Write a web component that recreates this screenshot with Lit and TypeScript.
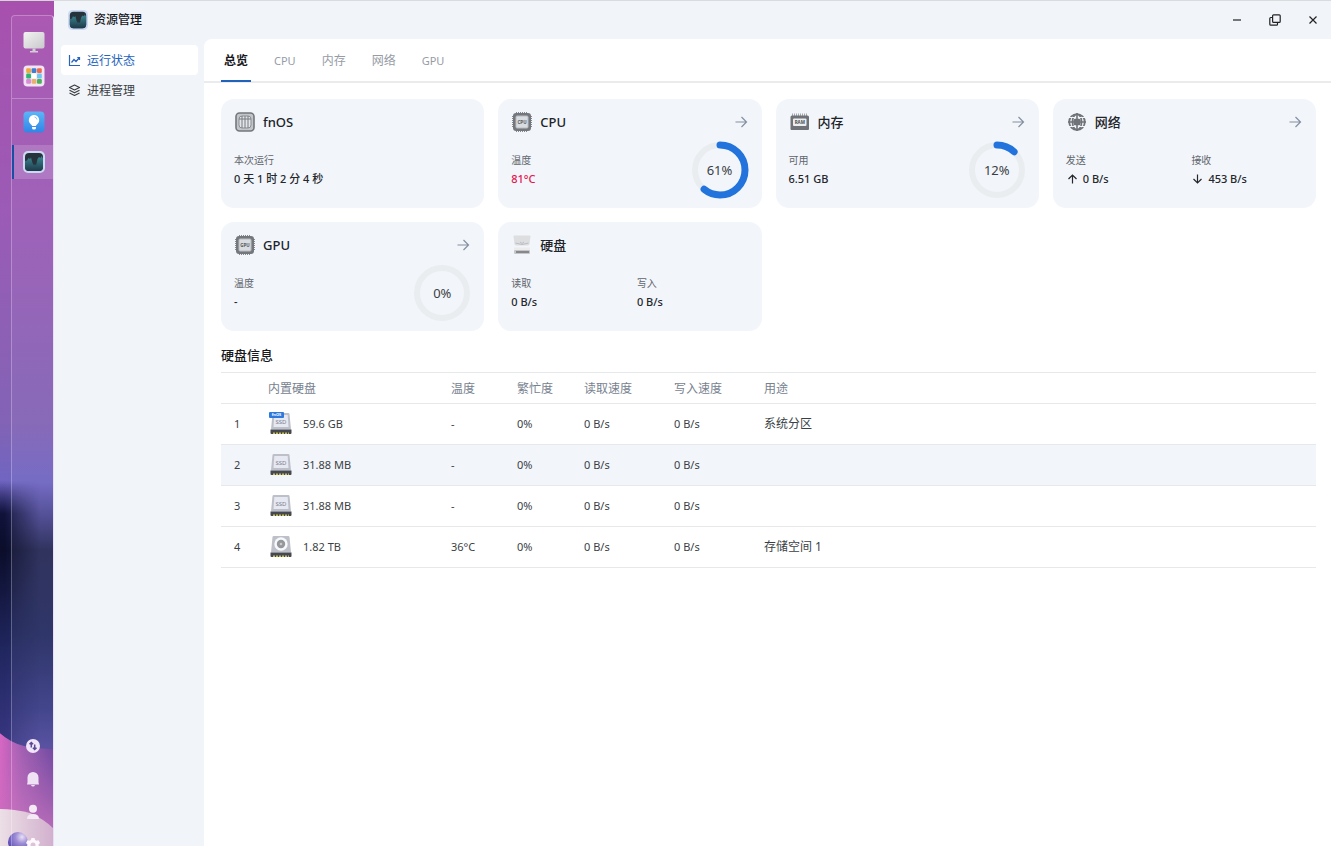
import { LitElement, html, svg, css } from "lit";
import { customElement, property, state } from "lit/decorators.js";

const wave = (id: string) => svg`
  <defs><linearGradient id=${id} x1="0" y1="0" x2="0" y2="1"><stop offset="0" stop-color="#3d8a95"/><stop offset="1" stop-color="#1d3948"/></linearGradient></defs>
  <rect width="22" height="22" rx="5" fill="#cbd9f2"/>
  <rect x="2" y="2" width="18" height="18" rx="4" fill="#26333c"/>
  <path fill="url(#${id})" d="M2 10l2-.5L5.500 7 7 8l1-1.500 1.500 5.500 1.500 2.500 1-1.500 1 1.500L14.500 8 16 6l1.500 1 1-2L20 7.500V16a4 4 0 0 1-4 4H6a4 4 0 0 1-4-4z"/>`;

const chip = (label: string) => svg`
  <path stroke="#85898d" stroke-width="1" d="M5.500 1v20M7.500 1v20M9.500 1v20M11.500 1v20M13.500 1v20M15.500 1v20M1 5.500h20M1 7.500h20M1 9.500h20M1 11.500h20M1 13.500h20M1 15.500h20"/>
  <rect x="2" y="2" width="18" height="18" rx="3" fill="#74787c"/>
  <rect x="5" y="5" width="12" height="12" rx="1" fill="#d9dce0" stroke="#b9bdc1"/>
  <text x="11" y="12.600" text-anchor="middle" font-size="4.500" font-weight="700" fill="#55595d">${label}</text>`;

const icons: Record<string, any> = {
  fnos: svg`<rect x="2" y="2" width="18" height="18" rx="3.500" fill="#c2c5c9" stroke="#74777b" stroke-width="1.600"/>
    <rect x="5" y="5" width="12" height="12" rx="3" fill="#e3e5e8" stroke="#8b8f93"/>
    <path stroke="#777b80" stroke-width="1" d="M8 5v12M11 5v12M14 5v12M5 8h12" fill="none"/>`,
  cpu: chip("CPU"),
  gpu: chip("GPU"),
  ram: svg`<path stroke="#a5a8ac" d="M3.500 2.500v3M5.500 2.500v3M7.500 2.500v3M9.500 2.500v3M11.500 2.500v3M13.500 2.500v3M15.500 2.500v3M17.500 2.500v3"/>
    <path fill="#6f7276" d="M3 4.500h15.500a1.500 1.500 0 0 1 1.500 1.500v12a1 1 0 0 1-1 1H2.500a1 1 0 0 1-1-1V6A1.500 1.500 0 0 1 3 4.500z"/>
    <rect x="4" y="7.500" width="13.500" height="7.500" rx="1" fill="#eceef0"/>
    <text x="10.800" y="12.900" text-anchor="middle" font-size="4.500" font-weight="700" fill="#4b4e52">RAM</text>`,
  net: svg`<circle cx="11" cy="11" r="7.800" fill="none" stroke="#707377" stroke-width="1.800"/>
    <ellipse cx="11" cy="11" rx="4.600" ry="7.800" fill="none" stroke="#707377" stroke-width="1.600"/>
    <path stroke="#f2f5fa" stroke-width="1.200" d="M3 6.500h16M3 15.500h16"/>
    <path stroke="#707377" stroke-width="1.600" d="M2 11h18M11 2v18"/>
    <rect x="7.500" y="7.700" width="7" height="6.600" rx="1.500" fill="#707377"/>`,
  hdd: svg`<path fill="#dcdee0" d="M2.500 2.500q0-1 1-1h15q1 0 1 1l-1 7.500q-.2 1.500-2 1.500h-11q-1.800 0-2-1.500z"/>
    <path fill="none" stroke="#bcbfc2" d="M4.500 9q6.500 3 13 0M9 8l2 1.500L13 8"/>
    <path fill="#ececed" d="M3 13.500h16v2.500H3z"/><rect x="3" y="16" width="16" height="4" rx="1" fill="#c4c6c8"/><path fill="#86888a" d="M5 17h13v2H5z"/>`,
};

@customElement("res-ring")
export class ResRing extends LitElement {
  @property({ type: Number }) value = 0;
  static styles = css`
    :host { display: grid; width: 58px; height: 58px; place-items: center; font-size: 13px; color: #3b3f45; }
    .ring, .label { grid-area: 1 / 1; }
    .track { fill: none; stroke: #eaedf0; stroke-width: 6; }
    .bar { fill: none; stroke: #2273dc; stroke-width: 7; stroke-linecap: round; }
  `;
  render() {
    return html`<svg class="ring" width="58" height="58" viewBox="0 0 58 58" aria-hidden="true">
        <circle class="track" cx="29" cy="29" r="25" />
        ${this.value > 0
          ? svg`<circle class="bar" cx="29" cy="29" r="25" pathLength="100" stroke-dasharray="${this.value} 100" transform="rotate(-90 29 29)"/>`
          : null}
      </svg><span class="label">${this.value}%</span>`;
  }
}

interface Stat { label: string; value: string; hot?: boolean; arrow?: "up" | "down"; }
interface Card { icon: string; title: string; stats: Stat[]; ring?: number; link?: boolean; }

const cards: Card[] = [
  { icon: "fnos", title: "fnOS", stats: [{ label: "本次运行", value: "0 天 1 时 2 分 4 秒" }] },
  { icon: "cpu", title: "CPU", link: true, ring: 61, stats: [{ label: "温度", value: "81°C", hot: true }] },
  { icon: "ram", title: "内存", link: true, ring: 12, stats: [{ label: "可用", value: "6.51 GB" }] },
  { icon: "net", title: "网络", link: true, stats: [{ label: "发送", value: "0 B/s", arrow: "up" }, { label: "接收", value: "453 B/s", arrow: "down" }] },
  { icon: "gpu", title: "GPU", link: true, ring: 0, stats: [{ label: "温度", value: "-" }] },
  { icon: "hdd", title: "硬盘", stats: [{ label: "读取", value: "0 B/s" }, { label: "写入", value: "0 B/s" }] },
];

const disks = [
  { kind: "ssd", system: true, size: "59.6 GB", temp: "-", use: "系统分区" },
  { kind: "ssd", system: false, size: "31.88 MB", temp: "-", use: "" },
  { kind: "ssd", system: false, size: "31.88 MB", temp: "-", use: "" },
  { kind: "hdd", system: false, size: "1.82 TB", temp: "36°C", use: "存储空间 1" },
];

const diskIcon = (kind: string, system: boolean) => html`<svg class="disk" width="24" height="24" viewBox="0 0 24 24" aria-hidden="true">
  <path fill="#bdc0c9" d="M3.500 2q.2-1 1.200-1h14.600q1 0 1.200 1L22 17.500H2z"/>
  <path fill="#454850" d="M1.500 17.500h21V21a1 1 0 0 1-1 1h-19a1 1 0 0 1-1-1z"/>
  <path stroke="#c9bf56" stroke-width="1.500" stroke-dasharray="2 1" d="M4 21.200h16"/>
  ${kind === "ssd"
    ? svg`<path fill="#e6e8f2" d="M5.300 3h13.400l.8 12h-15z"/><text x="12" y="12" text-anchor="middle" font-size="6" fill="#7c808b">SSD</text>`
    : svg`<circle cx="12" cy="9" r="6.700" fill="#f8f9fa"/><circle cx="12" cy="9" r="4.200" fill="#94979b"/><circle cx="12" cy="9" r="1.300" fill="#c9cbce"/>`}
  ${system ? svg`<rect x="0" y="0" width="15" height="6" rx="1" fill="#2f78dc"/><text x="7.500" y="4.200" text-anchor="middle" font-size="4" font-weight="700" fill="#fff">fnOS</text>` : null}
</svg>`;

@customElement("app-root")
export class AppRoot extends LitElement {
  @state() private tab = "总览";

  static styles = css`
    :host {
      display: grid; grid-template-columns: 54px minmax(0, 1fr); height: 100vh; overflow: hidden;
      font-family: "Noto Sans", "Noto Sans CJK SC", sans-serif; font-size: 12px; line-height: 16px; color: #24272c;
    }
    * { box-sizing: border-box; }
    button { font: inherit; color: inherit; border: 0; background: none; padding: 0; margin: 0; cursor: pointer; }
    a { color: inherit; text-decoration: none; }
    svg { display: block; flex: none; }

    .side { position: relative; display: flex; padding: 14px 0 0 11px; min-height: 0; overflow: hidden; border-top: 1px solid #d5d5d8; }
    .wall { position: absolute; inset: 0; width: 100%; height: 100%; }
    .dock { position: relative; flex: 1; display: flex; flex-direction: column; border: 1px solid #ffffff44; border-right: 1px solid #e9dff5; border-bottom: 0; border-radius: 4px 4px 0 0; background: #ffffff0c; }
    .apps { display: flex; flex-direction: column; padding: 9px 0 5px; border-bottom: 1px solid #ffffff44; }
    .app { display: flex; align-items: center; justify-content: center; width: 100%; height: 34px; padding-left: 2px; }
    .running { display: flex; flex-direction: column; gap: 6px; padding-top: 6px; }
    .app.on { background: #ffffff28; box-shadow: inset 2px 0 #174fa5; }
    .tray { display: flex; flex-direction: column; gap: 17px; margin-top: auto; margin-bottom: -7px; align-items: center; }
    .tray button { height: 16px; }

    .window { display: flex; flex-direction: column; min-width: 0; background: #f1f5fa; border-top: 1px solid #d9dbdd; }
    .bar { display: flex; align-items: center; height: 38px; padding: 0 12px 0 14px; gap: 6px; flex: none; }
    .title { margin: 0; font-size: 12px; font-weight: 500; flex: 1; color: #17191d; }
    .controls { display: flex; gap: 26px; }
    .body { flex: 1; display: grid; grid-template-columns: 150px minmax(0, 1fr); min-height: 0; }
    .nav { display: flex; flex-direction: column; padding: 6px 6px 0 7px; }
    .nav a { display: flex; align-items: center; gap: 6px; height: 30px; padding: 1px 7px 0; border-radius: 4px; color: #3b3f45; }
    .nav a.on { background: #fff; color: #2563bd; }

    .main { background: #fff; border-top-left-radius: 8px; min-width: 0; overflow: hidden; }
    .tabs { display: flex; gap: 20px; height: 44px; padding: 0 17px; border-bottom: 2px solid #e9ebed; }
    .tab { height: 43px; padding: 0 3px; color: #969ca6; }
    .tab.latin { font-size: 11px; }
    .tab.on { color: #17191d; font-weight: 700; border-bottom: 2px solid #2163bc; padding-top: 2px; }

    .content { padding: 16px 15px 16px 17px; }
    .cards { display: grid; grid-template-columns: repeat(4, minmax(0, 1fr)); gap: 14px; }
    .card { display: flex; flex-direction: column; height: 109px; padding: 12px 13px 0; border-radius: 13px; background: #f2f5fa; }
    .head { display: flex; align-items: center; gap: 7px; height: 22px; }
    .head h2 { flex: 1; margin: 0; font-size: 13px; font-weight: 500; color: #202328; }
    .facts { display: grid; grid-template-columns: 1fr 1fr; column-gap: 14px; margin-top: 18px; flex: 1; align-items: start; }
    .facts dl { margin: 0; }
    dt { font-size: 10px; line-height: 18px; color: #61656c; }
    dd { display: flex; align-items: center; gap: 4px; margin: 0; font-size: 11px; line-height: 20px; font-weight: 500; white-space: nowrap; color: #24272c; }
    dd.hot { color: #e3164f; }
    res-ring { justify-self: end; margin-top: -10px; }

    .section { margin: 15px 0 8px; font-size: 13px; line-height: 18px; font-weight: 500; color: #17191d; }
    .disks { width: 100%; border-collapse: collapse; table-layout: fixed; border-top: 1px solid #e6e8ea; }
    .disks th { height: 31px; padding: 1px 0 0; text-align: left; font-weight: 400; color: #77828f; border-bottom: 1px solid #e6e8ea; }
    .disks td { height: 41px; padding: 0; font-size: 11px; color: #3b3f45; border-bottom: 1px solid #e6e8ea; }
    .disks td.use { font-size: 12px; }
    .disks td.no { padding-left: 13px; }
    .disks tr.over { background: #f2f5fa; }
    .c-no { width: 47px; } .c-name { width: 183px; } .c-temp { width: 66px; } .c-busy { width: 67px; } .c-speed { width: 90px; }
    .name { display: flex; align-items: center; gap: 10px; padding-left: 1px; }
  `;

  private arrow(dir: "up" | "down") {
    return html`<svg width="13" height="12" viewBox="0 0 13 12" fill="none" stroke="#24272c" stroke-width="1.200" aria-hidden="true">
      <path d=${dir === "up" ? "M6.500 10.500V2M2.500 6l4-4 4 4" : "M6.500 1.500V10M2.500 6l4 4 4-4"} /></svg>`;
  }

  private card(c: Card) {
    return html`<section class="card">
      <div class="head">
        <svg width="22" height="22" viewBox="0 0 22 22" aria-hidden="true">${icons[c.icon]}</svg>
        <h2>${c.title}</h2>
        ${c.link ? html`<button aria-label="${c.title} 详情"><svg width="16" height="16" viewBox="0 0 16 16" fill="none" stroke="#8490a0" stroke-width="1.200"><path d="M2.500 8h11M8.500 3l5 5-5 5"/></svg></button>` : null}
      </div>
      <div class="facts">
        ${c.stats.map((s) => html`<dl><dt>${s.label}</dt><dd class=${s.hot ? "hot" : ""}>${s.arrow ? this.arrow(s.arrow) : null}<span>${s.value}</span></dd></dl>`)}
        ${c.ring !== undefined ? html`<res-ring .value=${c.ring}></res-ring>` : null}
      </div>
    </section>`;
  }

  private wallpaper() {
    return html`<svg class="wall" viewBox="0 0 54 846" preserveAspectRatio="none" aria-hidden="true">
      <defs>
        <linearGradient id="sky" x1="0" y1="0" x2="0" y2="1">
          <stop offset="0" stop-color="#a850ae"/><stop offset=".25" stop-color="#9b5bb6"/><stop offset=".5" stop-color="#8263b5"/>
          <stop offset=".57" stop-color="#6f65c2"/><stop offset=".61" stop-color="#4a4790"/><stop offset=".65" stop-color="#262956"/>
          <stop offset=".75" stop-color="#252d62"/><stop offset=".84" stop-color="#3b3d88"/><stop offset=".88" stop-color="#504a9c"/>
        </linearGradient>
        <linearGradient id="deep" x1="0" y1="0" x2="0" y2="1">
          <stop offset="0" stop-color="#17174c" stop-opacity="0"/><stop offset=".12" stop-color="#10123a"/><stop offset=".25" stop-color="#0b0d2a"/><stop offset=".6" stop-color="#20265e"/><stop offset="1" stop-color="#3a3886"/>
        </linearGradient>
        <linearGradient id="fade" x1="0" y1="0" x2="1" y2="0"><stop offset=".1" stop-color="#fff"/><stop offset="1" stop-color="#000"/></linearGradient>
        <mask id="left"><rect y="480" width="40" height="280" fill="url(#fade)"/></mask>
        <linearGradient id="pink" x1="0" y1="0" x2="1" y2="0"><stop offset="0" stop-color="#d868c4"/><stop offset=".4" stop-color="#9a58ae"/><stop offset="1" stop-color="#5c3d98"/></linearGradient>
        <linearGradient id="rose" x1="0" y1="0" x2="0" y2="1"><stop offset="0" stop-color="#c564bc" stop-opacity="0"/><stop offset="1" stop-color="#cb72bd" stop-opacity=".9"/></linearGradient>
        <linearGradient id="pale" x1="0" y1="0" x2="1" y2="0"><stop offset="0" stop-color="#ecdfe6"/><stop offset="1" stop-color="#cfaccb"/></linearGradient>
        <radialGradient id="ball" cx=".7" cy=".25" r=".8"><stop offset="0" stop-color="#e8e0f6"/><stop offset=".4" stop-color="#9a88d4"/><stop offset="1" stop-color="#5446b4"/></radialGradient>
      </defs>
      <rect width="54" height="846" fill="url(#sky)"/>
      <rect y="480" width="40" height="280" fill="url(#deep)" mask="url(#left)"/>
      <path fill="url(#pink)" d="M0 733q10 9 24 13 14 3 30 3v97H0z"/>
      <path fill="url(#rose)" d="M0 733q10 9 24 13 14 3 30 3v97H0z"/>
      <path fill="url(#pale)" d="M0 809q14 0 30 4 14 6 24 16v17H0z"/>
      <circle cx="18" cy="842" r="10" fill="url(#ball)"/>
    </svg>`;
  }

  render() {
    const colors = ["#f2a93c", "#3f7fd0", "#ef6a4a", "#2bb673", "#ffffff", "#6fc6f2", "#d98bd6", "#e8b070", "#4cb05a"];
    return html`
      <aside class="side">
        ${this.wallpaper()}
        <div class="dock">
          <div class="apps">
            <button class="app" aria-label="桌面"><svg width="22" height="22" viewBox="0 0 22 22"><defs><linearGradient id="scr" x1="0" y1="0" x2="1" y2="1"><stop stop-color="#f3f3f3"/><stop offset="1" stop-color="#c9c9cc"/></linearGradient></defs><rect x=".5" y="1" width="21" height="16.500" rx="2" fill="url(#scr)"/><path fill="#d3cdd8" d="M9.500 17.500h3V20H15v1.500H7V20h2.500z"/></svg></button>
            <button class="app" aria-label="应用"><svg width="22" height="22" viewBox="0 0 22 22"><rect x=".5" y=".5" width="21" height="21" rx="4" fill="#f1e4f4"/>${colors.map((c, i) => svg`<rect x=${3.2 + (i % 3) * 5.4} y=${3.2 + Math.floor(i / 3) * 5.4} width="4.800" height="4.800" rx="1.200" fill=${c}/>`)}</svg></button>
          </div>
          <div class="running">
            <button class="app" aria-label="提示"><svg width="22" height="22" viewBox="0 0 22 22"><defs><linearGradient id="tip" x1="0" y1="0" x2="0" y2="1"><stop stop-color="#5db5f8"/><stop offset="1" stop-color="#3185e6"/></linearGradient></defs><rect x=".5" y=".5" width="21" height="21" rx="4" fill="url(#tip)"/><path fill="#fff" d="M11 4a5.200 5.200 0 0 0-3 9.400c.8.600 1 1.100 1 1.600h4c0-.5.200-1 1-1.600A5.200 5.200 0 0 0 11 4zM9 16h4v1q0 1.500-2 1.500T9 17z"/><path d="M11.500 6a3 3 0 0 1 2.500 2.500" stroke="#8cc6f8" fill="none"/></svg></button>
            <button class="app on" aria-label="资源管理"><svg width="22" height="22" viewBox="0 0 22 22">${wave("w1")}</svg></button>
          </div>
          <div class="tray">
            <button aria-label="传输"><svg width="16" height="16" viewBox="0 0 16 16"><circle cx="8" cy="8" r="7" fill="#f0e6f7"/><path fill="none" stroke="#5a4a96" stroke-width="1.500" d="M6.300 9.500V4.500M4.500 6.300l1.800-1.800 1.800 1.800M9.700 6.500v5M7.900 9.700l1.800 1.800 1.800-1.800"/></svg></button>
            <button aria-label="通知"><svg width="16" height="16" viewBox="0 0 16 16"><path fill="#f0e2f5" d="M8 1a5.500 5.500 0 0 0-5.500 5.500v5L2 13.500h12l-.5-2v-5A5.500 5.500 0 0 0 8 1zM6 14h4q-.5 1.500-2 1.500T6 14z"/></svg></button>
            <button aria-label="用户"><svg width="16" height="16" viewBox="0 0 16 16"><circle cx="8" cy="4.800" r="4" fill="#f5e9f6"/><path fill="#f5e9f6" d="M2 15q0-5 6-5t6 5z"/></svg></button>
            <button aria-label="设置"><svg width="16" height="16" viewBox="0 0 16 16"><path fill="#fdf8fd" fill-rule="evenodd" d="M6.500 1h3l.6 2 1.400.8 2-.5 1.500 2.600L13.500 7.500v1l1.500 1.600-1.500 2.600-2-.5-1.400.8-.6 2h-3l-.6-2-1.400-.8-2 .5L1 10.100l1.500-1.600v-1L1 5.900l1.500-2.600 2 .5L5.900 3zM8 5.500a2.500 2.500 0 1 0 0 5 2.500 2.500 0 0 0 0-5z"/></svg></button>
          </div>
        </div>
      </aside>
      <div class="window">
        <header class="bar">
          <svg width="20" height="20" viewBox="0 0 22 22" aria-hidden="true">${wave("w2")}</svg>
          <h1 class="title">资源管理</h1>
          <div class="controls">
            <button aria-label="最小化"><svg width="12" height="12" viewBox="0 0 12 12"><path d="M2 6h8" stroke="#222" stroke-width="1.200"/></svg></button>
            <button aria-label="还原"><svg width="12" height="12" viewBox="0 0 12 12" fill="none" stroke="#222" stroke-width="1.200"><rect x="3.600" y=".8" width="7.600" height="7.600" rx="1"/><path d="M3.500 3.500H1.800a1 1 0 0 0-1 1v5.700a1 1 0 0 0 1 1h5.700a1 1 0 0 0 1-1V8.500"/></svg></button>
            <button aria-label="关闭"><svg width="12" height="12" viewBox="0 0 12 12"><path d="M2.500 2.500l7 7M9.500 2.500l-7 7" stroke="#222" stroke-width="1.200"/></svg></button>
          </div>
        </header>
        <div class="body">
          <nav class="nav">
            <a class="on" href="#status"><svg width="13" height="13" viewBox="0 0 13 13" fill="none" stroke="#2563bd" stroke-width="1.200"><path d="M1.500 1v10.500H12M3.500 8.500l2.500-3 2 2 3.500-4M11.500 6V3.500H9.300"/></svg>运行状态</a>
            <a href="#process"><svg width="13" height="13" viewBox="0 0 13 13" fill="none" stroke="#3b3f45" stroke-width="1.200" stroke-linejoin="round"><path d="M6.500 1l5 2.500-5 2.500-5-2.500zM1.500 6.300l5 2.500 5-2.500M1.500 9l5 2.500 5-2.500"/></svg>进程管理</a>
          </nav>
          <main class="main">
            <div class="tabs" role="tablist">
              ${["总览", "CPU", "内存", "网络", "GPU"].map((t) => html`<button role="tab" aria-selected=${this.tab === t} class="tab ${/^[A-Z]+$/.test(t) ? "latin" : ""} ${this.tab === t ? "on" : ""}" @click=${() => (this.tab = t)}>${t}</button>`)}
            </div>
            <div class="content">
              <div class="cards">${cards.map((c) => this.card(c))}</div>
              <h2 class="section">硬盘信息</h2>
              <table class="disks">
                <colgroup><col class="c-no"><col class="c-name"><col class="c-temp"><col class="c-busy"><col class="c-speed"><col class="c-speed"><col></colgroup>
                <thead><tr><th></th>${["内置硬盘", "温度", "繁忙度", "读取速度", "写入速度", "用途"].map((h) => html`<th scope="col">${h}</th>`)}</tr></thead>
                <tbody>
                  ${disks.map((d, i) => html`<tr class=${i === 1 ? "over" : ""}>
                    <td class="no">${i + 1}</td>
                    <td><div class="name">${diskIcon(d.kind, d.system)}<span>${d.size}</span></div></td>
                    <td>${d.temp}</td><td>0%</td><td>0 B/s</td><td>0 B/s</td><td class="use">${d.use}</td>
                  </tr>`)}
                </tbody>
              </table>
            </div>
          </main>
        </div>
      </div>`;
  }
}
